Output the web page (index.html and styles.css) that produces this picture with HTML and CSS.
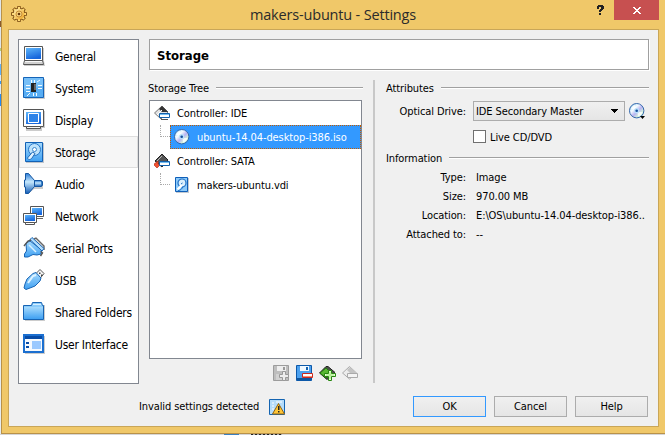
FILE: index.html
```html
<!DOCTYPE html>
<html lang="en">
<head>
<meta charset="utf-8">
<title>makers-ubuntu - Settings</title>
<link rel="stylesheet" href="styles.css">
</head>
<body>
<svg class="defs" width="0" height="0">
  <defs>
    <linearGradient id="blue" x1="0" y1="0" x2="0.4" y2="1"><stop offset="0" stop-color="#5fb6fa"/><stop offset="1" stop-color="#1767dc"/></linearGradient>
    <linearGradient id="sky" x1="0" y1="0" x2="0" y2="1"><stop offset="0" stop-color="#a6dafd"/><stop offset="1" stop-color="#3fa0f2"/></linearGradient>
    <linearGradient id="cone" x1="0" y1="0" x2="0" y2="1"><stop offset="0" stop-color="#2b7cd6"/><stop offset=".42" stop-color="#c6e8fd"/><stop offset="1" stop-color="#125bb5"/></linearGradient>
    <linearGradient id="gold" x1="0" y1="0" x2="1" y2="1"><stop offset="0" stop-color="#fff0b0"/><stop offset="1" stop-color="#eda321"/></linearGradient>
    <linearGradient id="disc" x1="0" y1="0" x2="1" y2="1"><stop offset="0" stop-color="#8fd3f6"/><stop offset=".35" stop-color="#f4fbff"/><stop offset=".55" stop-color="#b9b4f2"/><stop offset=".75" stop-color="#d6f7d9"/><stop offset="1" stop-color="#5ba6e8"/></linearGradient>
    <symbol id="cd" viewBox="0 0 16 16"><circle cx="7.7" cy="7.7" r="7.200" fill="url(#disc)" stroke="#3467ab"/><path d="M2 6A6 6 0 0 1 6 2L7 6ZM13.500 9A6 6 0 0 1 9 13.500L8.500 9Z" fill="#fff" opacity=".8"/><circle cx="7.700" cy="7.700" r="2.600" fill="#b9e1fb"/><circle cx="7.700" cy="7.700" r="1.300" fill="#174c9c"/></symbol>
    <symbol id="hdd" viewBox="0 0 22 22"><path d="M3 2h18v20H3z" fill="#9ba5b0" opacity=".6"/><path d="M2.500 1.500h17v19h-17z" fill="url(#sky)" stroke="#1261b5"/><circle cx="11.500" cy="8.500" r="6" fill="#bfe3fb" stroke="#2676c8"/><circle cx="11.500" cy="8.500" r="2" fill="#fff" stroke="#3d89d0"/><path d="M4.500 17l5-6 2.500 1.500-3 4.500c-1.500 2-4 2-4.500 0z" fill="#dff2ff" stroke="#2169b6"/></symbol>
    <symbol id="hdd-small" viewBox="0 0 16 16"><path d="M2 1h13v15H2z" fill="#9ba5b0" opacity=".6"/><path d="M1.500.500h12v14h-12z" fill="#8ccafa" stroke="#0f5fb8"/><circle cx="8" cy="6" r="4" fill="#d9effd" stroke="#1f70c6" stroke-width="1.200"/><path d="M3.500 12.500L8 8" stroke="#fff" stroke-width="2.400"/><path d="M4 13.500c3 0 4-2 5-4M7 7l1.500-1" fill="none" stroke="#1f70c6"/></symbol>
  </defs>
</svg>
<div class="behind"></div>
<div class="window">
  <header class="titlebar">
    <svg class="gear" width="17" height="17" viewBox="0 0 17 17"><g stroke="#70400a" stroke-width="3.600"><path d="M8 .200v15.600M.200 8h15.600M2.500 2.500l11 11M13.500 2.500l-11 11"/></g><circle cx="8" cy="8" r="6.200" fill="#70400a"/><g stroke="#ffda73" stroke-width="2.200"><path d="M8 1v14M1 8h14M3 3l10 10M13 3L3 13"/></g><circle cx="8" cy="8" r="5.500" fill="url(#gold)"/><circle cx="8" cy="8" r="3" fill="#f9d57c" stroke="#b97c28" stroke-width=".8"/><circle cx="8" cy="8" r="1.300" fill="#653708"/></svg>
    <h1>makers-ubuntu - Settings</h1>
    <div class="sys">
      <svg width="7" height="11" viewBox="0 0 7 11" shape-rendering="crispEdges"><path d="M1 0h5v1h1v3H6v1H5v1H4v1H2V5h1V4h1V2H2v2H0V1h1zM2 8h2v2H2z" fill="#222"/></svg>
      <button class="close" aria-label="Close"><svg width="8" height="7" viewBox="0 0 8 7" shape-rendering="crispEdges"><path d="M0 0h2v1h1v1h2V1h1V0h2v1H7v1H6v1H5v1h1v1h1v1h1v1H6V6H5V5H3v1H2v1H0V6h1V5h1V4h1V3H2V2H1V1H0z" fill="#fff"/></svg></button>
    </div>
  </header>
  <main class="client">
    <nav class="sidebar">
      <a><svg viewBox="0 0 22 22"><path d="M3 3h18v13l1 5H1z" fill="#999" opacity=".5"/><path d="M1.500 1.500h18v14h-18z" fill="#fff" stroke="#555"/><path d="M3 3h15v11H3z" fill="url(#blue)"/><path d="M1.500 15.500h18l1 4H.500z" fill="#f8f8f8" stroke="#555"/><path d="M1 18h19" stroke="#aaa"/></svg><span>General</span></a>
      <a><svg viewBox="0 0 22 22"><path d="M2 2h20v20H2z" fill="#999" opacity=".5"/><path d="M.500.500h20v20H.500z" fill="#58adf3" stroke="#1564b8"/><path d="M1 1h19v8L1 14z" fill="#8accfb" opacity=".6"/><path d="M3 8.500h4M3 11.500h4M3 14.500h4M15 8.500h4M15 11.500h4M14 5l3-2M8.500 3v3M11.500 3v3M7 16l-3 3M10.500 16v3M13.500 16v3" stroke="#f3fbff"/><path d="M8 6h5v9H8z" fill="#222"/><path d="M11 7h2v6h-2z" fill="#666"/></svg><span>System</span></a>
      <a><svg viewBox="0 0 22 22"><path d="M2 2h20v17h-3v3H3z" fill="#999" opacity=".5"/><path d="M.500.500h20v17H.500z" fill="#fff" stroke="#555"/><path d="M3 3h15v12H3z" fill="url(#blue)"/><path d="M5.500 4.500h10v9h-10z" fill="#2d83e8" stroke="#fff"/><path d="M3.500 17.500h14v2h-14z" fill="#f6f6f6" stroke="#555"/></svg><span>Display</span></a>
      <a class="active"><svg viewBox="0 0 22 22"><use href="#hdd"/></svg><span>Storage</span></a>
      <a><svg viewBox="0 0 22 22"><path d="M3 1l4 3 4 5h9v7h-9l-6 5z" fill="#999" opacity=".5"/><path d="M2.500.500h3l6 7v6l-6 7h-3V14h-1V7h1z" fill="url(#cone)" stroke="#1557a2"/><path d="M11.500 7.500h7v6h-7z" fill="url(#cone)" stroke="#1557a2"/><path d="M18.500 8.500h1v4h-1" fill="#60b0ef" stroke="#1557a2"/></svg><span>Audio</span></a>
      <a><svg viewBox="0 0 22 22"><path d="M7.500 1.500h13v10h-13z" fill="#fff" stroke="#555"/><path d="M9 3h10v7H9z" fill="url(#blue)"/><path d="M13 13.500h7" stroke="#666"/><path d="M.500 8.500h13v9H.500z" fill="#fff" stroke="#555"/><path d="M2 10h10v6H2z" fill="url(#blue)"/><path d="M2.500 17.500h9v2h-9z" fill="#fff" stroke="#555"/></svg><span>Network</span></a>
      <a><svg viewBox="0 0 22 22"><path d="M11 2l2-1 8 8v4" fill="#ddd" stroke="#666" stroke-width="1.400"/><path d="M3 6l4-2 12 9-1 4-4 1-4-.500L5 20H1.500v-3L3.500 14z" fill="url(#sky)" stroke="#1764b4"/><path d="M7 2.500l2-2 12 11-2 2.500z" fill="#b5defc" stroke="#1764b4"/><path d="M1 9l4-5 3-1M17.500 14.500l2 1.500-2 3" fill="none" stroke="#555" stroke-width="1.400"/><path d="M6 8l7 7" stroke="#d8f0ff" stroke-width="1.500"/></svg><span>Serial Ports</span></a>
      <a><svg viewBox="0 0 22 22"><path d="M13 4.500L17 .500l4 4-4 5z" fill="#f7f7f7" stroke="#555"/><path d="M16 3.500h1.500v1.500H16zM18 5.500h1.500V7H18z" fill="#444"/><path d="M10 4.500l3-1 5 5.500-1 3-5 5-5 2-4 1.500-2-1.500L2 15l2-5z" fill="url(#sky)" stroke="#1764b4"/><path d="M5 14l5-7 3-1" stroke="#def3ff" fill="none" stroke-width="2"/></svg><span>USB</span></a>
      <a><svg viewBox="0 0 22 22"><path d="M2 4h20v16H2z" fill="#999" opacity=".5"/><path d="M.500 4.500h8l1-3h9l1 3h1V18.500H.500z" fill="#8acbfa" stroke="#1764b4"/><path d="M10 3.500h8" fill="none" stroke="#d7efff"/><path d="M1 6h19v12H1z" fill="url(#sky)"/></svg><span>Shared Folders</span></a>
      <a><svg viewBox="0 0 22 22"><path d="M2 3h20v18H2z" fill="#999" opacity=".5"/><path d="M1 2h19v17H1z" fill="#f5faff" stroke="#1b6fd0" stroke-width="2"/><path d="M2 3h17v3H2z" fill="#074ba6"/><path d="M3 9h3v2H3zM3 13h3v2H3z" fill="#074ba6"/><path d="M9 8h9v8H9z" fill="#9ac9ff"/></svg><span>User Interface</span></a>
    </nav>
    <section class="page">
      <h2 class="heading">Storage</h2>
      <div class="columns">
        <div class="left">
          <div class="group"><span>Storage Tree</span><i></i></div>
          <div class="tree">
            <div class="row"><svg viewBox="0 0 16 16"><path d="M.500 8L8 1l6 6-7 7z" fill="#e2e2e2" stroke="#777"/><path d="M5 4l3-3 6 6H8z" fill="#333"/><path d="M3 10l5-5" stroke="#fff"/><path d="M7 14.500h7" stroke="#555"/><path d="M5.500 8.500h10v4h-10z" fill="#fff" stroke="#1260aa"/><path d="M6 9.500h9" stroke="#75bdf2"/></svg><span>Controller: IDE</span></div>
            <div class="row child selected"><b class="branch"></b><div class="cell"><svg viewBox="0 0 16 16"><use href="#cd"/></svg><span>ubuntu-14.04-desktop-i386.iso</span></div></div>
            <div class="row"><svg viewBox="0 0 16 16"><path d="M1 8l7-7 6 6-6 7z" fill="#555" stroke="#222"/><path d="M3 8l5-5" stroke="#bbb"/><path d="M0 11l4-3v3l2 1-3 3-3-3z" fill="#f15332" stroke="#ad2814" stroke-width=".6"/><path d="M5.500 8.500h10v4h-10z" fill="#fff" stroke="#1260aa"/><path d="M6 9.500h9" stroke="#75bdf2"/></svg><span>Controller: SATA</span></div>
            <div class="row child"><b class="branch"></b><div class="cell"><svg viewBox="0 0 16 16"><use href="#hdd-small"/></svg><span>makers-ubuntu.vdi</span></div></div>
          </div>
          <div class="tools">
            <svg viewBox="0 0 17 17"><path d="M.500.500h15v15H.500z" fill="#bebebe" stroke="#9c9c9c"/><path d="M4 1h9v5H4z" fill="#eee"/><path d="M10 2h2v3h-2z" fill="#999"/><path d="M3 9h10v6H3z" fill="#d2d2d2"/><path d="M9.500 6.500h3v3h3v3h-3v3h-3v-3h-3v-3h3z" fill="#eee" stroke="#999"/></svg>
            <svg viewBox="0 0 17 17"><path d="M.500.500h15v15H.500z" fill="#4ca1ef" stroke="#0c58a9"/><path d="M4 1h9v5H4z" fill="#eef8ff"/><path d="M10 2h2v3h-2z" fill="#1260ae"/><path d="M1 13h15v2H1z" fill="#0e559e"/><path d="M6.500 8.500h10v4h-10z" fill="#fff" stroke="#c92920"/><path d="M7 11.500h9" stroke="#f98d79"/></svg>
            <svg viewBox="0 0 17 17"><path d="M.500 8L7 1.500h2l7 6-8 7z" fill="#4c514a" stroke="#222"/><path d="M1 8l6-5 5 5-5 5z" fill="#58b732" stroke="#267812"/><path d="M9.500 5.500h3v3h4v3h-4v4h-3v-4h-4v-3h4z" fill="#e1ffd0" stroke="#278611"/><path d="M7 10h8M11 7v7" stroke="#a2e87c"/></svg>
            <svg viewBox="0 0 17 17"><path d="M.500 8l7-6.500 7 6.500-7 6z" fill="#ededed" stroke="#aaa"/><path d="M5 5l3-3 6 6H8z" fill="#c4c4c4"/><path d="M5.500 8.500h10v4h-10z" fill="#f4f4f4" stroke="#aaa"/></svg>
          </div>
        </div>
        <div class="splitter"></div>
        <div class="right">
          <div class="group"><span>Attributes</span><i></i></div>
          <div class="field drive"><label>Optical Drive:</label><div class="select"><span>IDE Secondary Master</span><svg width="7" height="4" viewBox="0 0 7 4" shape-rendering="crispEdges"><path d="M0 0h7v1H6v1H5v1H4v1H3V3H2V2H1V1H0z"/></svg></div><svg class="choose" viewBox="0 0 16 16"><use href="#cd"/><path d="M11 13h5l-2.500 3z"/></svg></div>
          <div class="field live"><label></label><div class="check"></div><span>Live CD/DVD</span></div>
          <div class="group info"><span>Information</span><i></i></div>
          <div class="field"><label>Type:</label><span>Image</span></div>
          <div class="field"><label>Size:</label><span>970.00 MB</span></div>
          <div class="field"><label>Location:</label><span>E:\OS\ubuntu-14.04-desktop-i386..</span></div>
          <div class="field"><label>Attached to:</label><span>--</span></div>
        </div>
      </div>
    </section>
    <footer class="footer">
      <span class="warning">Invalid settings detected</span>
      <svg class="warnicon" viewBox="0 0 16 16"><path d="M.500.500h15v15H.500z" fill="#b5dcfa" stroke="#1464b1"/><path d="M3 4h2M3 7h2M3 10h2M7 3h6" stroke="#fff"/><path d="M9.500 4.500l6 10.500H3.500z" fill="#ffc637" stroke="#8e6213"/><path d="M9 7h1.500v4H9zM9 12h1.500v1.500H9z" fill="#222"/></svg>
      <div class="buttons"><button class="default">OK</button><button>Cancel</button><button>Help</button></div>
    </footer>
  </main>
</div>
<div class="below"><i class="app"></i><i class="caption"></i></div>
</body>
</html>
```
FILE: styles.css
```css
* { box-sizing: border-box; }
body { margin: 0; width: 665px; height: 435px; overflow: hidden; background: #d6d6d6; color: #000; font: 11px/14px "DejaVu Sans Condensed", "DejaVu Sans", sans-serif; font-stretch: condensed; letter-spacing: -.1px; display: grid; grid-template: 434px 1px / 1px 664px; }
.defs { position: absolute; }
svg { display: block; flex: none; }
button { font: inherit; letter-spacing: inherit; color: inherit; padding: 0; border-radius: 0; }
.behind { background: linear-gradient(#dfe5ea 21px, #8a5a2a 21px 27px, #dfe5ea 27px 48px, #b4cc7a 48px 51px, #e8eef3 51px 64px, #62b1f5 64px 75px, #dceaf5 75px 81px, #3d9af0 81px 84px, #dceaf5 84px 94px, #268af0 94px 106px, #e6ecf1 106px); }
.window { width: 664px; height: 434px; padding: 0 6px 6px; border: solid #b99249; border-width: 0 0 1px 1px; background: #f0c869; }
.below { grid-column: 1 / -1; display: flex; padding-left: 224px; gap: 12px; }
.app { width: 15px; background: #3b7fc0; }
.caption { width: 31px; background: repeating-linear-gradient(90deg, #222 0 2px, #aaa 2px 4px); }
.titlebar { height: 29px; display: flex; align-items: flex-start; }
.gear { margin: 6px 0 0 3px; }
.titlebar h1 { margin: 5px 0 0 222px; width: 200px; font: 14.5px/20px "Open Sans", sans-serif; letter-spacing: -.18px; color: #2b2b2b; white-space: nowrap; }
.sys { margin-left: auto; display: flex; align-items: flex-start; gap: 10px; }
.sys > svg { margin-top: 5px; }
.close { width: 45px; height: 20px; border: 0; background: #c75050; display: flex; justify-content: center; align-items: center; }
.client { width: 651px; height: 398px; border: 1px solid #c9a658; background: #f0f0f0; display: grid; grid-template: 345px 1fr / 121px 500px; column-gap: 10px; padding: 9px 8px 9px 9px; }
.sidebar { width: 121px; height: 345px; background: #fff; border: 1px solid #828790; }
.sidebar a { height: 32px; display: flex; align-items: center; gap: 10px; padding-left: 3px; border: 1px solid transparent; font-size: 12px; letter-spacing: -.25px; white-space: nowrap; }
.sidebar span { padding-top: 2px; }
.sidebar a.active { background: #f6f6f6; border-color: #dedede; }
.sidebar svg { width: 22px; height: 22px; }
.heading { margin: 0; width: 500px; height: 31px; padding-left: 7px; border: 1px solid #a0a0a0; box-shadow: 1px 1px #fff; background: #fff; font: bold 13px/31px "DejaVu Sans Condensed", sans-serif; letter-spacing: 0; }
.columns { display: flex; padding-top: 10px; }
.left { width: 214px; }
.group { height: 16px; display: flex; align-items: center; gap: 7px; margin-left: -1px; }
.group span, .row span, .field span, .field label { padding-top: 2px; }
.group i { flex: 1; height: 2px; background: #a0a0a0; border-bottom: 1px solid #fff; }
.tree { margin-top: 4px; height: 259px; background: #fff; border: 1px solid #828790; width: 213px; }
.row { height: 24px; display: flex; align-items: center; gap: 7px; padding-left: 4px; }
.row svg { width: 16px; height: 16px; }
.child { padding-left: 10px; gap: 0; }
.branch { width: 10px; height: 12px; align-self: flex-start; border: dotted #aaa; border-width: 0 0 1px 1px; }
.cell { flex: 1; height: 24px; display: flex; align-items: center; gap: 7px; padding-left: 4px; }
.selected .cell { background: #3399ff; color: #fff; outline: 1px dotted #c35c00; outline-offset: -1px; }
.tools { display: flex; justify-content: flex-end; gap: 6px; margin: 6px 4px 0 0; }
.tools svg { width: 17px; height: 17px; }
.splitter { width: 2px; height: 303px; margin: 0 10px; background: #c8c8c8; }
.right { width: 264px; }
.right .group { margin-left: 1px; }
.field { height: 19px; display: flex; align-items: center; white-space: nowrap; }
.field label { width: 81px; margin-right: 10px; text-align: right; }
.drive { height: 20px; margin-top: 5px; }
.drive label, .live label { margin-right: 7px; }
.select { width: 152px; height: 20px; padding: 0 6px 0 2px; display: flex; align-items: center; justify-content: space-between; border: 1px solid #acacac; background: linear-gradient(#f0f0f0, #e5e5e5); }
.choose { width: 16px; height: 16px; margin-left: 4px; }
.live { margin-top: 6px; }
.check { width: 13px; height: 13px; border: 1px solid #707070; background: #fff; margin-right: 4px; }
.right .info { margin: 4px 0 1px 1px; }
.footer { grid-column: 1 / -1; align-self: end; height: 23px; margin-bottom: -1px; display: flex; align-items: center; padding: 0 1px 0 121px; }
.warning { width: 130px; letter-spacing: -.1px; white-space: nowrap; }
.warnicon { width: 16px; height: 16px; }
.buttons { margin-left: auto; display: flex; gap: 8px; }
.buttons button { width: 73px; height: 21px; border: 1px solid #acacac; background: linear-gradient(#f0f0f0, #e5e5e5); }
.buttons .default { border-color: #3399ff; }
```
